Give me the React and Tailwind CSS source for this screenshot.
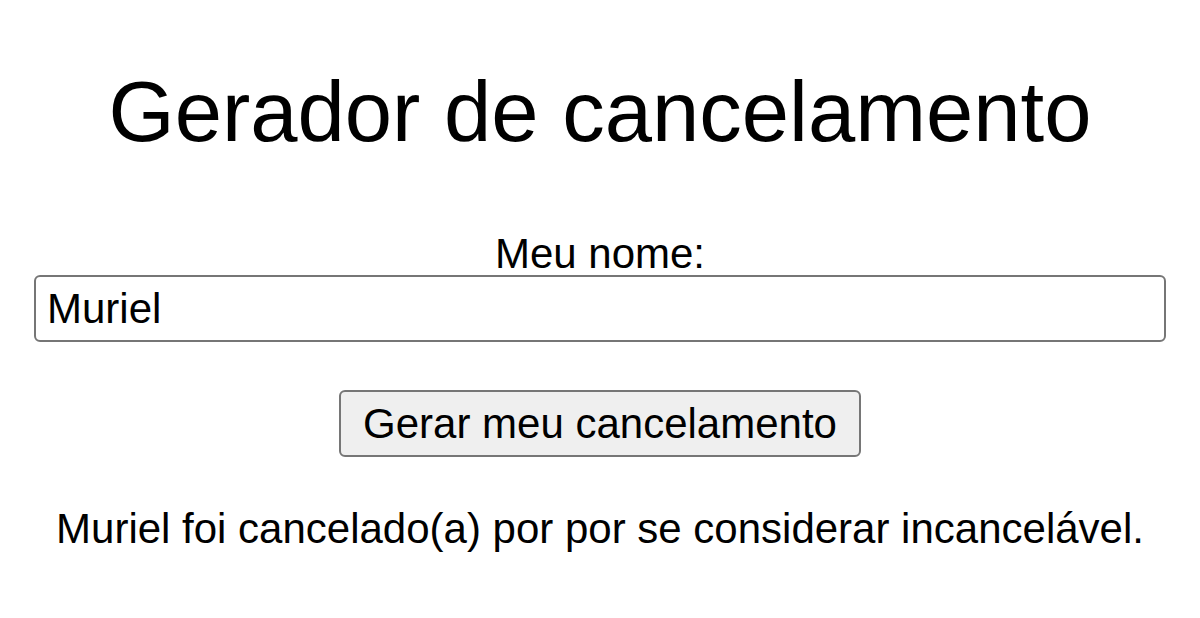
import { useState } from 'react'

export default function App() {
  const [name, setName] = useState('Muriel')
  const [result, setResult] = useState('Muriel foi cancelado(a) por por se considerar incancelável.')

  return (
    <div className="min-h-screen bg-white text-black font-['Liberation_Sans',Arial,sans-serif] px-[34px]">
      <div className="flex flex-col items-center">
        <h1 className="text-[85px] leading-none mt-[69px]">Gerador de cancelamento</h1>

        <label htmlFor="nome" className="text-[42px] leading-none mt-[79px]">Meu nome:</label>
        <input
          id="nome"
          type="text"
          value={name}
          onChange={(e) => setName(e.target.value)}
          className="w-full h-[67px] mt-0 px-[11px] text-[42px] border-2 border-[#767676] rounded-md bg-white outline-none"
        />

        <button
          onClick={() => setResult(`${name} foi cancelado(a) por por se considerar incancelável.`)}
          className="mt-[48px] h-[67px] px-[22px] text-[42px] bg-[#efefef] border-2 border-[#767676] rounded-md"
        >
          Gerar meu cancelamento
        </button>

        <p className="text-[42px] leading-none mt-[51px]">{result}</p>
      </div>
    </div>
  )
}
